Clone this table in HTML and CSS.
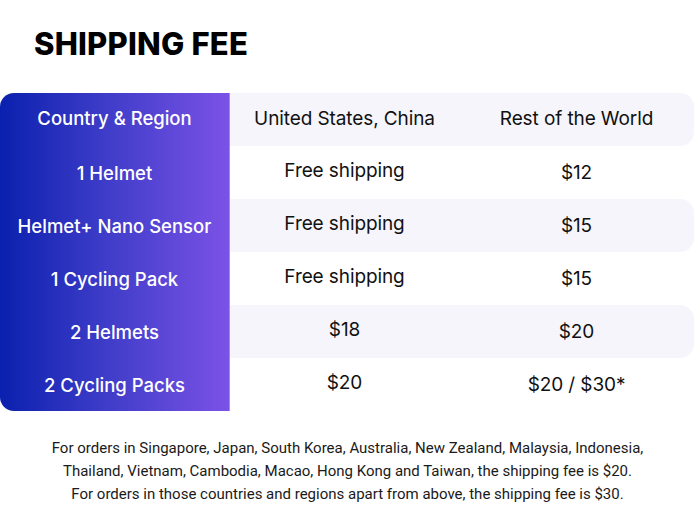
FILE: index.html
```html
<!DOCTYPE html>
<html>
<head>
<meta charset="utf-8">
<link rel="stylesheet" href="styles.css">
</head>
<body>
<div class="page">
  <h1 class="title">SHIPPING FEE</h1>
  <div class="table">
    <div class="labels">
      <div class="label">Country &amp; Region</div>
      <div class="label">1 Helmet</div>
      <div class="label">Helmet+ Nano Sensor</div>
      <div class="label">1 Cycling Pack</div>
      <div class="label">2 Helmets</div>
      <div class="label">2 Cycling Packs</div>
    </div>
    <div class="data">
      <div class="row shaded"><div class="cell mid">United States, China</div><div class="cell right">Rest of the World</div></div>
      <div class="row"><div class="cell mid raised">Free shipping</div><div class="cell right">$12</div></div>
      <div class="row shaded"><div class="cell mid raised">Free shipping</div><div class="cell right">$15</div></div>
      <div class="row"><div class="cell mid raised">Free shipping</div><div class="cell right">$15</div></div>
      <div class="row shaded"><div class="cell mid raised">$18</div><div class="cell right">$20</div></div>
      <div class="row"><div class="cell mid raised">$20</div><div class="cell right">$20 / $30*</div></div>
    </div>
  </div>
  <p class="note">For orders in Singapore, Japan, South Korea, Australia, New Zealand, Malaysia, Indonesia,<br>Thailand, Vietnam, Cambodia, Macao, Hong Kong and Taiwan, the shipping fee is $20.<br>For orders in those countries and regions apart from above, the shipping fee is $30.</p>
</div>
</body>
</html>
```

FILE: styles.css
```css
* { box-sizing: border-box; }
html, body { margin: 0; padding: 0; background: #ffffff; }
body { font-family: Inter, "Noto Sans", sans-serif; color: #111; width: 695px; height: 525px; overflow: hidden; }
.page { padding-top: 26px; }
.title {
  margin: 0 0 0 34px;
  font-size: 31px;
  font-weight: 800;
  line-height: 36px;
  letter-spacing: 0.2px;
  color: #000;
}
.table {
  display: flex;
  margin-top: 31px;
  width: 695px;
}
.labels {
  width: 230px;
  flex: none;
  border-radius: 14px 0 0 14px;
  background: linear-gradient(90deg, #0a20ae 0%, #3d3cc8 45%, #7b52e6 100%);
  border-right: 1px solid #a585f2;
}
.label {
  height: 53px;
  display: flex;
  align-items: center;
  justify-content: center;
  color: #ffffff;
  font-size: 18.5px;
  font-weight: 500;
  letter-spacing: 0;
}
.label:first-child { padding-bottom: 3px; }
.data { flex: 1; padding-right: 1px; }
.row {
  height: 53px;
  display: flex;
  align-items: center;
}
.row.shaded { background: #f5f5fb; border-radius: 0 14px 14px 0; }
.row:first-child .cell { position: relative; top: -1px; }
.cell {
  font-size: 19px;
  font-weight: 400;
  color: #111;
  text-align: center;
  letter-spacing: -0.1px;
}
.mid { width: 229px; }
.right { flex: 1; }
.raised { position: relative; top: -2px; }
.note {
  margin: 26px 0 0;
  text-align: center;
  font-family: Roboto, "Liberation Sans", sans-serif;
  font-size: 15px;
  line-height: 23px;
  color: #1a1a1a;
  letter-spacing: 0;
}
```
